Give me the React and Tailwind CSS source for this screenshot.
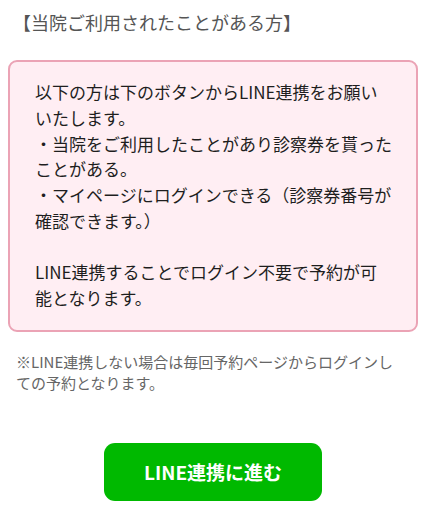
export default function App() {
  return (
    <div className="w-[426px] bg-white font-['Noto_Sans_CJK_JP',sans-serif]">
      <div className="h-[44px] flex items-center pl-[13px] text-[18px] text-[#555555]">
        【当院ご利用されたことがある方】
      </div>
      <div className="mt-[16px] mx-[8px] border-2 border-[#eba3b5] bg-[#ffeef3] rounded-[9px] pl-[25px] pr-[10px] pt-[17px] pb-[19px] text-[17px] leading-[25.75px] text-[#1e1e1e] whitespace-nowrap">
        以下の方は下のボタンからLINE連携をお願い
        <br />
        いたします。
        <br />
        ・当院をご利用したことがあり診察券を貰った
        <br />
        ことがある。
        <br />
        ・マイページにログインできる（診察券番号が
        <br />
        確認できます。）
        <br />
        <br />
        LINE連携することでログイン不要で予約が可
        <br />
        能となります。
      </div>
      <p className="mt-[19px] px-[16px] text-[15px] leading-[21px] text-[#666666] whitespace-nowrap">
        ※LINE連携しない場合は毎回予約ページからログインし
        <br />
        ての予約となります。
      </p>
      <div className="mt-[50px] flex justify-center pb-[4px]">
        <button className="w-[218px] h-[58px] rounded-[11px] bg-[#00b900] text-white font-bold text-[19px]">
          LINE連携に進む
        </button>
      </div>
    </div>
  );
}
